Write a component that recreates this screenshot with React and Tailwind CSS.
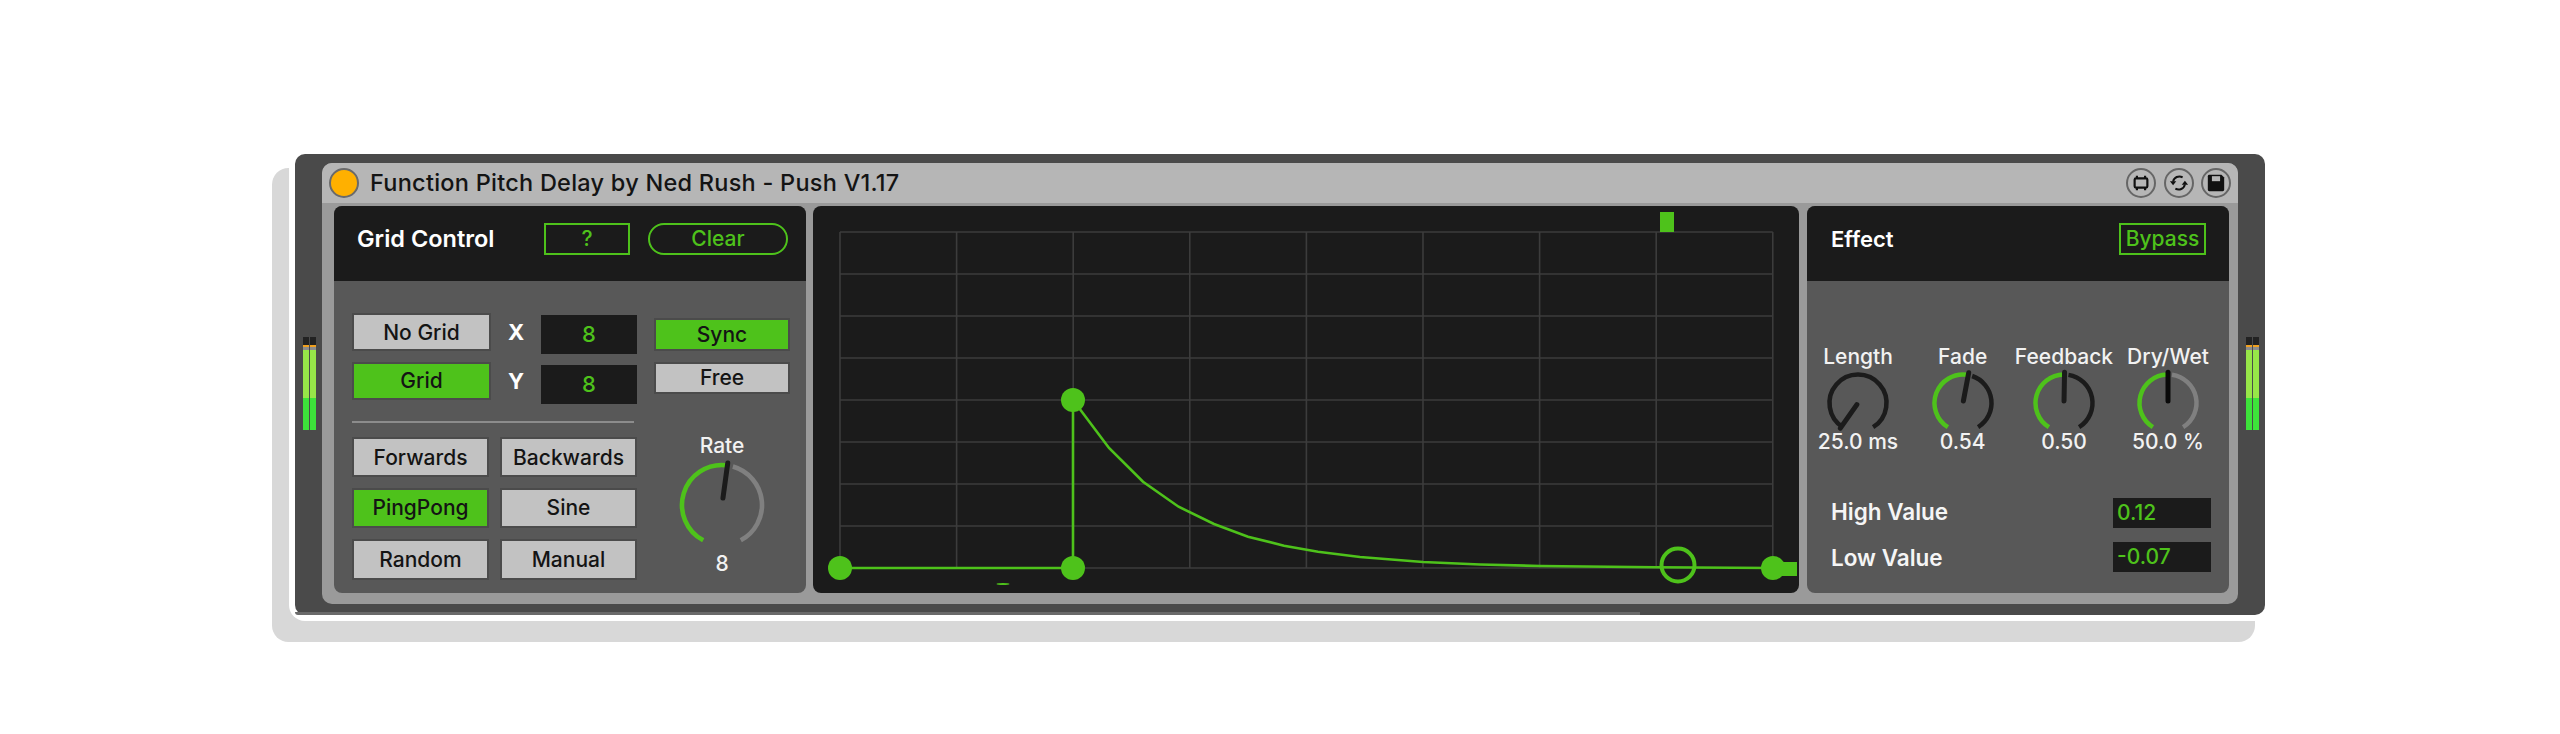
import React from "react";

const GREEN = "#4ec21b";

function pt(cx, cy, r, deg) {
  const a = (deg * Math.PI) / 180;
  return [cx + r * Math.sin(a), cy - r * Math.cos(a)];
}
function arc(cx, cy, r, from, to) {
  const [x1, y1] = pt(cx, cy, r, from);
  const [x2, y2] = pt(cx, cy, r, to);
  return `M${x1} ${y1}A${r} ${r} 0 ${to - from > 180 ? 1 : 0} 1 ${x2} ${y2}`;
}

function Knob({ w, h, cx, cy, r, sw, psw, angle, tail = 2, green, rest, pointer = "#1b1b1b", gap = 8, lim = 148 }) {
  const [px1, py1] = pt(cx, cy, tail, angle);
  const [px2, py2] = pt(cx, cy, r + sw / 2, angle);
  return (
    <svg width={w} height={h} viewBox={`0 0 ${w} ${h}`} className="block overflow-visible">
      {green && <path d={arc(cx, cy, r, -lim, angle - 2)} fill="none" stroke={GREEN} strokeWidth={sw} />}
      <path d={arc(cx, cy, r, green ? angle + gap : -lim, lim)} fill="none" stroke={rest} strokeWidth={sw} />
      <line x1={px1} y1={py1} x2={px2} y2={py2} stroke={pointer} strokeWidth={psw} strokeLinecap="round" />
    </svg>
  );
}

function Btn({ on, className = "", children }) {
  return (
    <div
      className={`flex items-center justify-center border-2 border-[#4b4b4b] text-[21px] text-[#141414] ${
        on ? "bg-[#4ec21b]" : "bg-[#c2c2c2]"
      } ${className}`}
    >
      {children}
    </div>
  );
}

function Meter() {
  const bar = (
    <div className="flex h-[93px] w-[5.5px] flex-col bg-[#3de33a]">
      <div className="h-[8px] bg-[#222222]" />
      <div className="h-[2px] bg-[#f0a020]" />
      <div className="h-[3px] bg-[#8c8c8c]" />
      <div className="h-[48px] bg-[#97e648]" />
    </div>
  );
  return (
    <div className="flex w-[12.5px] justify-between">
      {bar}
      {bar}
    </div>
  );
}

function SmallKnob({ label, value, ...rest }) {
  return (
    <div className="flex w-[100px] flex-col items-center text-[21px] leading-[24px] text-[#f2f2f2]">
      <div className="whitespace-nowrap">{label}</div>
      <Knob w={68} h={61} cx={34} cy={34} r={28.5} sw={4.5} psw={5} {...rest} />
      <div className="whitespace-nowrap">{value}</div>
    </div>
  );
}

const CURVE = [
  [1073, 400], [1109, 448], [1143, 481.7], [1178.6, 506.7], [1214, 524], [1248, 536.7], [1284, 545.7],
  [1318, 551.7], [1360, 557], [1423, 562], [1480, 564.5], [1540, 566], [1656, 567.3], [1773, 568],
]
  .map(([x, y]) => `${x - 813},${y - 206}`)
  .join(" ");

function Graph() {
  const ox = 813;
  const oy = 206;
  const xs = Array.from({ length: 9 }, (_, i) => 840 + i * 116.6 - ox);
  const ys = Array.from({ length: 9 }, (_, i) => 232 + i * 42 - oy);
  return (
    <svg width="986" height="387" viewBox="0 0 986 387" className="block">
      {xs.map((x) => (
        <line key={x} x1={x} x2={x} y1={ys[0]} y2={ys[8]} stroke="#3c3c3c" strokeWidth="1.6" />
      ))}
      {ys.map((y) => (
        <line key={y} x1={xs[0]} x2={xs[8]} y1={y} y2={y} stroke="#3c3c3c" strokeWidth="1.6" />
      ))}
      <rect x={1660 - ox} y={212 - oy} width="14" height="20" fill={GREEN} />
      <polyline points={`27,362 260,362 260,194`} fill="none" stroke={GREEN} strokeWidth="2.6" />
      <polyline points={CURVE} fill="none" stroke={GREEN} strokeWidth="2.6" />
      <circle cx={27} cy={362} r="12" fill={GREEN} />
      <circle cx={260} cy={362} r="12" fill={GREEN} />
      <circle cx={260} cy={194} r="12" fill={GREEN} />
      <circle cx={960} cy={362} r="12" fill={GREEN} />
      <rect x={967} y={356} width="17" height="14" fill={GREEN} />
      <circle cx={1678 - ox} cy={565 - oy} r="16.5" fill="none" stroke={GREEN} strokeWidth="4" />
      <ellipse cx={1003 - ox} cy={584 - oy} rx="6.5" ry="1" fill={GREEN} />
    </svg>
  );
}

function RoundIcon({ children }) {
  return (
    <div className="flex h-[30px] w-[30px] items-center justify-center rounded-full border-[2.5px] border-[#666666]">
      <svg width="20" height="20" viewBox="0 0 22 22">{children}</svg>
    </div>
  );
}

export default function App() {
  return (
    <div
      className="h-[734px] w-[2560px] overflow-hidden bg-white pl-[295px] pt-[154px] font-[450] text-[#141414]"
      style={{ fontFamily: "Inter, 'Liberation Sans', sans-serif" }}
    >
      <div className="relative flex h-[461px] w-[1970px] rounded-[10px] bg-[#4a4a4a] shadow-[0_0_0_6px_#ffffff,-16.5px_20.5px_0_6.5px_#d8d8d8]">
        <div className="absolute bottom-0 left-0 h-[3px] w-[1345px] rounded-bl-[10px] bg-[#6a6a6a]" />
        <div className="w-[27px] pl-[8px] pt-[183px]">
          <Meter />
        </div>
        <div className="mt-[9px] flex h-[441px] w-[1916px] flex-col overflow-hidden rounded-[10px] bg-[#9a9a9a]">
          <div className="flex h-[40px] items-center bg-[#b6b6b6] pl-[7px] pr-[7px]">
            <div className="h-[30px] w-[30px] rounded-full border-2 border-[#6a6a6a] bg-[#ffb000]" />
            <div className="ml-[11px] flex-1 text-[23.5px] font-medium tracking-[0.25px] text-[#141414]">
              Function Pitch Delay by Ned Rush - Push V1.17
            </div>
            <div className="flex gap-[7.5px]">
              <RoundIcon>
                <rect x="4" y="6" width="14" height="10" rx="1.5" fill="none" stroke="#111" strokeWidth="2.4" />
                <path d="M6.5 3v3M15.5 3v3M6.5 16v3M15.5 16v3" stroke="#111" strokeWidth="2.4" />
              </RoundIcon>
              <RoundIcon>
                <path d="M4.5 9.5A7 7 0 0 1 15 4.8" fill="none" stroke="#111" strokeWidth="2.2" />
                <path d="M17.5 12.5A7 7 0 0 1 7 17.2" fill="none" stroke="#111" strokeWidth="2.2" />
                <path d="M1 9L4.5 13.5L8 9Z M21 13L17.5 8.5L14 13Z" fill="#111" />
              </RoundIcon>
              <RoundIcon>
                <path d="M2 3.5Q2 2 3.5 2H17L20 5V18.5Q20 20 18.5 20H3.5Q2 20 2 18.5Z" fill="#111" />
                <rect x="6.5" y="3.5" width="9" height="5.5" fill="#b6b6b6" />
              </RoundIcon>
            </div>
          </div>
          <div className="flex pl-[12px] pt-[3px]">
            {/* Grid Control */}
            <div className="h-[387px] w-[472px] overflow-hidden rounded-[8px] bg-[#585858]">
              <div className="flex h-[75px] items-start bg-[#1b1b1b] pl-[23px] pt-[17px]">
                <div className="flex h-[32px] w-[187px] items-center whitespace-nowrap text-[23.5px] font-semibold text-white">
                  Grid Control
                </div>
                <div className="flex h-[32px] w-[86px] items-center justify-center border-2 border-[#4ec21b] text-[21px] text-[#4ec21b]">
                  ?
                </div>
                <div className="ml-[18px] flex h-[32px] w-[140px] items-center justify-center rounded-full border-2 border-[#4ec21b] text-[21px] text-[#4ec21b]">
                  Clear
                </div>
              </div>
              <div className="flex gap-[17px] pl-[18px] pt-[32px]">
                <div className="w-[285px]">
                  <div className="flex h-[49px] items-start">
                    <Btn className="h-[38px] w-[139px] pt-[2px]">No Grid</Btn>
                    <div className="flex h-[38px] w-[50px] items-center justify-center text-[22px] font-bold text-white">X</div>
                    <div className="mt-[2px] flex h-[39px] w-[96px] items-center justify-center bg-[#1b1b1b] text-[22px] text-[#4ec21b]">8</div>
                  </div>
                  <div className="flex h-[42px] items-start">
                    <Btn on className="h-[38px] w-[139px]">Grid</Btn>
                    <div className="flex h-[38px] w-[50px] items-center justify-center text-[22px] font-bold text-white">Y</div>
                    <div className="mt-[3px] flex h-[39px] w-[96px] items-center justify-center bg-[#1b1b1b] text-[22px] text-[#4ec21b]">8</div>
                  </div>
                  <div className="mt-[17px] h-[2px] w-[282px] bg-[#8c8c8c]" />
                  <div className="mt-[14px] grid grid-cols-[137px_137px] gap-x-[11px] gap-y-[11px]">
                    <Btn className="h-[40px] pt-[2px]">Forwards</Btn>
                    <Btn className="h-[40px] pt-[2px]">Backwards</Btn>
                    <Btn on className="h-[40px]">PingPong</Btn>
                    <Btn className="h-[40px]">Sine</Btn>
                    <Btn className="h-[41px]">Random</Btn>
                    <Btn className="h-[41px]">Manual</Btn>
                  </div>
                </div>
                <div className="flex w-[136px] flex-col items-center pt-[5px]">
                  <Btn on className="h-[33px] w-full pt-[1px]">Sync</Btn>
                  <Btn className="mt-[11px] h-[32px] w-full">Free</Btn>
                  <div className="mt-[40px] text-[21px] leading-[24px] text-[#f2f2f2]">Rate</div>
                  <div className="mt-[2px]">
                    <Knob w={90} h={90} cx={45} cy={45} r={40} sw={4.6} psw={5} angle={7.8} tail={7} green rest="#808080" lim={152} />
                  </div>
                  <div className="mt-[2px] text-[21px] leading-[24px] text-[#f2f2f2]">8</div>
                </div>
              </div>
            </div>
            {/* Graph */}
            <div className="ml-[7px] h-[387px] w-[986px] overflow-hidden rounded-[8px] bg-[#1b1b1b]">
              <Graph />
            </div>
            {/* Effect */}
            <div className="ml-[8px] h-[387px] w-[422px] overflow-hidden rounded-[8px] bg-[#585858]">
              <div className="flex h-[75px] items-start justify-between bg-[#1b1b1b] pl-[24px] pr-[23px] pt-[17px]">
                <div className="flex h-[32px] items-center text-[22px] font-semibold text-white">Effect</div>
                <div className="flex h-[32px] w-[87px] items-center justify-center border-2 border-[#4ec21b] text-[21px] text-[#4ec21b]">
                  Bypass
                </div>
              </div>
              <div className="flex pl-[1px] pt-[64px]">
                <SmallKnob label="Length" value="25.0 ms" angle={-145} rest="#1b1b1b" />
                <div className="ml-[4.7px]">
                  <SmallKnob label="Fade" value="0.54" angle={10.7} green rest="#1b1b1b" />
                </div>
                <div className="ml-[1.3px]">
                  <SmallKnob label="Feedback" value="0.50" angle={1} green rest="#1b1b1b" />
                </div>
                <div className="ml-[4px]">
                  <SmallKnob label="Dry/Wet" value="50.0 %" angle={0} green rest="#808080" pointer="#0a0a0a" />
                </div>
              </div>
              <div className="box-content flex h-[44px] items-start justify-between pl-[24px] pr-[18px] pt-[44px]">
                <div className="flex h-[27px] items-center text-[22.5px] font-semibold text-[#f5f5f5]">High Value</div>
                <div className="flex h-[30px] w-[98px] items-center bg-[#1b1b1b] pl-[4px] text-[21px] text-[#4ec21b]">0.12</div>
              </div>
              <div className="flex items-start justify-between pl-[24px] pr-[18px]">
                <div className="flex h-[31px] items-center pt-[1px] text-[22.5px] font-semibold text-[#f5f5f5]">Low Value</div>
                <div className="flex h-[30px] w-[98px] items-center bg-[#1b1b1b] pl-[4px] text-[21px] text-[#4ec21b]">-0.07</div>
              </div>
            </div>
          </div>
        </div>
        <div className="pl-[8px] pt-[183px]">
          <Meter />
        </div>
      </div>
    </div>
  );
}
